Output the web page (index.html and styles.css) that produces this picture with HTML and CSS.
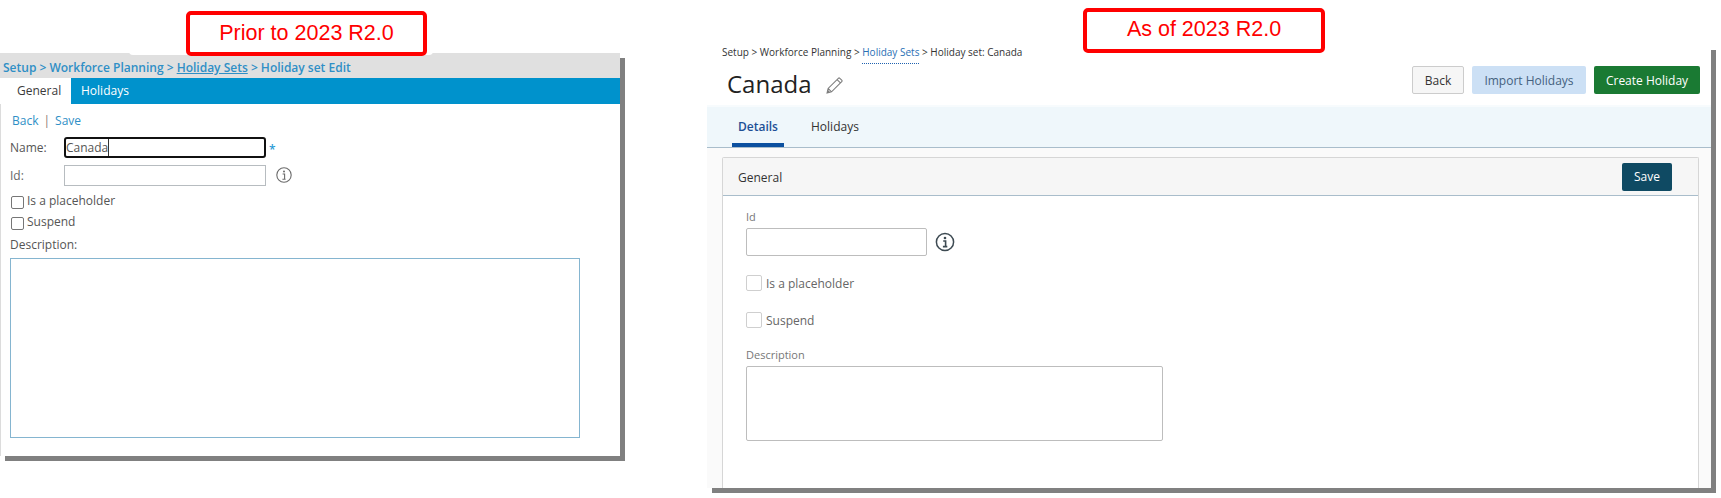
FILE: index.html
```html
<!DOCTYPE html>
<html lang="en">
<head>
<meta charset="utf-8">
<title>Holiday set comparison</title>
<link rel="stylesheet" href="styles.css">
</head>
<body>
<div class="canvas">
  <section class="old">
    <div class="old-crumbs">Setup &gt; Workforce Planning &gt; <a class="old-crumb-link">Holiday Sets</a> &gt; Holiday set Edit</div>
    <div class="old-tabs">
      <div class="old-tab old-tab-active">General</div>
      <div class="old-tab">Holidays</div>
    </div>
    <div class="old-body">
      <div class="old-actions"><a>Back</a><span class="old-sep">|</span><a>Save</a></div>
      <div class="old-row">
        <label class="old-label old-label-name">Name:</label>
        <div class="old-input old-input-focus"><span class="old-value">Canada</span></div>
        <span class="old-req">*</span>
      </div>
      <div class="old-row old-row-id">
        <label class="old-label old-label-id">Id:</label>
        <div class="old-input"></div>
        <svg class="old-info" viewBox="0 0 16 16" width="16" height="16"><circle cx="8" cy="8" r="7.2" fill="none" stroke="#6b6b6b" stroke-width="1.1"/><circle cx="8" cy="4.6" r="1" fill="#6b6b6b"/><path d="M6.6 7h2v5M6.4 12.2h3.2" fill="none" stroke="#6b6b6b" stroke-width="1.1"/></svg>
      </div>
      <div class="old-check old-check-first"><input type="checkbox" class="old-box"><span>Is a placeholder</span></div>
      <div class="old-check"><input type="checkbox" class="old-box"><span>Suspend</span></div>
      <div class="old-desc-label">Description:</div>
      <div class="old-textarea"></div>
    </div>
  </section>

  <section class="new">
    <div class="new-crumbs">Setup &gt; Workforce Planning &gt; <a class="new-crumb-link">Holiday Sets</a> &gt; Holiday set: Canada</div>
    <div class="new-head">
      <div class="new-title-wrap">
        <h1 class="new-title">Canada</h1>
        <svg class="new-pencil" viewBox="0 0 16 16" width="17" height="17"><path d="M1 15l1-4.2L11.6 1.2a1 1 0 0 1 1.4 0l1.8 1.8a1 1 0 0 1 0 1.4L5.2 14z M2 10.8L5.2 14 M10.4 2.4l3.2 3.2" fill="none" stroke="#7d7d7d" stroke-width="1"/><path d="M1 15l.7-3 2.3 2.3z" fill="#7d7d7d"/></svg>
      </div>
      <div class="new-buttons">
        <button class="btn btn-back">Back</button>
        <button class="btn btn-import">Import Holidays</button>
        <button class="btn btn-create">Create Holiday</button>
      </div>
    </div>
    <nav class="new-tabs">
      <div class="new-tab new-tab-active">Details</div>
      <div class="new-tab">Holidays</div>
    </nav>
    <div class="new-main">
      <div class="card">
        <div class="card-head">
          <span class="card-title">General</span>
          <button class="btn btn-save">Save</button>
        </div>
        <div class="card-body">
          <div class="field-label">Id</div>
          <div class="id-row">
            <div class="new-input"></div>
            <svg class="new-info" viewBox="0 0 20 20" width="20" height="20"><circle cx="10" cy="10" r="8.6" fill="none" stroke="#3d4a52" stroke-width="1.5"/><circle cx="10" cy="6" r="1.3" fill="#3d4a52"/><path d="M8.2 9h2.4v5.2M7.9 14.6h4.4" fill="none" stroke="#3d4a52" stroke-width="1.6"/></svg>
          </div>
          <div class="new-check new-check-first"><input type="checkbox" class="new-box"><span>Is a placeholder</span></div>
          <div class="new-check new-check-second"><input type="checkbox" class="new-box"><span>Suspend</span></div>
          <div class="field-label desc-label">Description</div>
          <div class="new-textarea"></div>
        </div>
      </div>
    </div>
  </section>

  <div class="glow"></div>
  <div class="callout callout-old">Prior to 2023 R2.0</div>
  <div class="callout callout-new">As of 2023 R2.0</div>
</div>
</body>
</html>
```
FILE: styles.css
```css
* { box-sizing: border-box; }
html, body { margin: 0; padding: 0; background: #fff; }
body { font-family: "Open Sans", "Liberation Sans", sans-serif; font-size: 12px; color: #333; }
.canvas { position: relative; width: 1721px; height: 498px; display: flex; align-items: flex-start; overflow: hidden; }

/* Old UI */
.old { width: 620px; height: 403px; margin-top: 53px; background: #fff; border-left: 1px solid #dcdcdc; box-shadow: 5px 5px 0 #808080; flex: none; }
.old-crumbs { height: 25px; margin-left: -1px; padding: 5px 0 0 3px; background: #e0e0e0; color: #2f8fc6; font-size: 12px; font-weight: 600; line-height: 20px; white-space: nowrap; }
.old-crumb-link { text-decoration: underline; }
.old-tabs { height: 26px; display: flex; background: #0092cc; margin-left: -1px; }
.old-tab { color: #fff; font-size: 12px; font-weight: 500; line-height: 26px; padding-left: 10px; }
.old-tab-active { width: 71px; background: #fff; color: #3a3a3a; font-weight: 400; padding-left: 17px; }
.old-body { padding-left: 9px; }
.old-actions { height: 33px; padding: 7px 0 0 2px; color: #2f8fc6; font-size: 12px; line-height: 20px; }
.old-sep { margin: 0 5px; color: #8a7a70; }
.old-row { display: flex; align-items: center; height: 21px; }
.old-row-id { margin-top: 7px; }
.old-label { width: 54px; color: #555; font-size: 12px; }
.old-label-id { color: #666; }
.old-input { width: 202px; height: 21px; border: 1px solid #b7bcc0; background: #fff; padding-left: 2px; line-height: 19px; }
.old-input-focus { border: 2px solid #111; border-radius: 3px; padding-left: 0; color: #555; line-height: 17px; }
.old-value { display: inline-block; height: 17px; padding-right: 0; border-right: 1px solid #333; }
.old-req { margin: 4px 0 0 3px; color: #2a9bd6; font-size: 12px; font-weight: 600; line-height: 12px; }
.old-info { margin: -2px 0 0 10px; }
.old-check { display: flex; align-items: flex-start; height: 13px; color: #555; line-height: 13px; margin-top: 8px; font-size: 12px; }
.old-check-first { margin-top: 10px; }
.old-check span { margin: -2px 0 0 3px; }
.old-box { appearance: none; width: 13px; height: 13px; margin: 0 0 0 1px; border: 1px solid #767676; border-radius: 2px; background: #fff; flex: none; }
.old-desc-label { margin-top: 5px; height: 23px; padding-top: 0; color: #555; line-height: 20px; font-size: 12px; }
.old-textarea { width: 570px; height: 180px; border: 1px solid #85b5d0; background: #fff; }

/* New UI */
.new { width: 1004px; height: 443px; margin: 45px 0 0 87px; background: #fff; box-shadow: 5px 5px 0 #808080; flex: none; display: flex; flex-direction: column; }
.new-crumbs { height: 14px; padding-left: 15px; color: #333; font-size: 10px; line-height: 14px; white-space: nowrap; }
.new-crumb-link { color: #2a6fb5; border-bottom: 1px dotted #1f62b0; padding-bottom: 4px; }
.new-head { display: flex; justify-content: space-between; align-items: flex-start; height: 46px; padding: 7px 11px 0 20px; }
.new-title-wrap { display: flex; align-items: center; padding-top: 1px; }
.new-title { margin: 0; font-size: 24px; font-weight: 400; line-height: 34px; color: #222; }
.new-pencil { margin: 3px 0 0 14px; }
.new-buttons { display: flex; gap: 8px; }
.btn { height: 28px; border: 0; border-radius: 2px; font-family: inherit; font-size: 12px; padding: 0; }
.btn-back { width: 52px; background: #f6f6f6; border: 1px solid #ccc; color: #333; }
.btn-import { width: 114px; background: #cce0f5; color: #44607e; }
.btn-create { width: 106px; background: #1a7a33; color: #fff; }
.new-tabs { height: 43px; display: flex; background: #eff7fb; border-bottom: 1px solid #a9bdcb; padding-left: 25px; box-shadow: inset 0 2px 0 #f7fbfd; }
.new-tab { color: #333; font-size: 12px; line-height: 38px; padding-top: 3px; }
.new-tab-active { width: 52px; margin-right: 27px; text-align: center; color: #1d5096; font-weight: 600; border-bottom: 4px solid #0b50a0; height: 42px; }
.new-main { flex: 1; min-height: 0; background: #fafafa; padding: 9px 12px 0 15px; }
.card { height: 100%; background: #fff; border: 1px solid #d6d6d6; border-bottom: 0; border-radius: 2px 2px 0 0; }
.card-head { height: 38px; display: flex; justify-content: space-between; align-items: center; background: #f6f6f6; border-bottom: 1px solid #a9bdcb; padding: 0 26px 0 15px; }
.card-title { color: #333; font-size: 12px; font-weight: 500; padding-top: 1px; }
.btn-save { width: 50px; background: #0f4a63; color: #fff; }
.card-body { padding: 13px 0 0 23px; }
.field-label { height: 19px; color: #777; font-size: 11px; line-height: 16px; }
.id-row { display: flex; align-items: center; height: 28px; }
.new-input { width: 181px; height: 28px; background: #fff; border: 1px solid #bdbdbd; border-radius: 2px; }
.new-info { margin-left: 8px; }
.new-check { display: flex; align-items: center; height: 16px; color: #666; font-size: 12px; }
.new-check-first { margin-top: 19px; }
.new-check-second { margin-top: 21px; }
.new-check span { margin-left: 4px; }
.new-box { appearance: none; width: 16px; height: 16px; margin: 0; background: #fff; border: 1px solid #cfcfcf; border-radius: 2px; flex: none; }
.desc-label { margin-top: 19px; height: 19px; }
.new-textarea { width: 417px; height: 75px; background: #fff; border: 1px solid #bdbdbd; border-radius: 2px; }

/* Annotations */
.glow { position: absolute; left: 129px; top: 50px; width: 304px; height: 5px; background: #fff; border-radius: 0 0 4px 4px; }
.callout { position: absolute; display: flex; align-items: center; justify-content: center; background: #fff; border: 4px solid #f00; border-radius: 5px; color: #f00; font-family: "Liberation Sans", Arial, sans-serif; font-size: 21.5px; }
.callout-old { left: 186px; top: 11px; width: 241px; height: 45px; padding-bottom: 1px; }
.callout-new { left: 1083px; top: 8px; width: 242px; height: 45px; padding-bottom: 3px; }
```
